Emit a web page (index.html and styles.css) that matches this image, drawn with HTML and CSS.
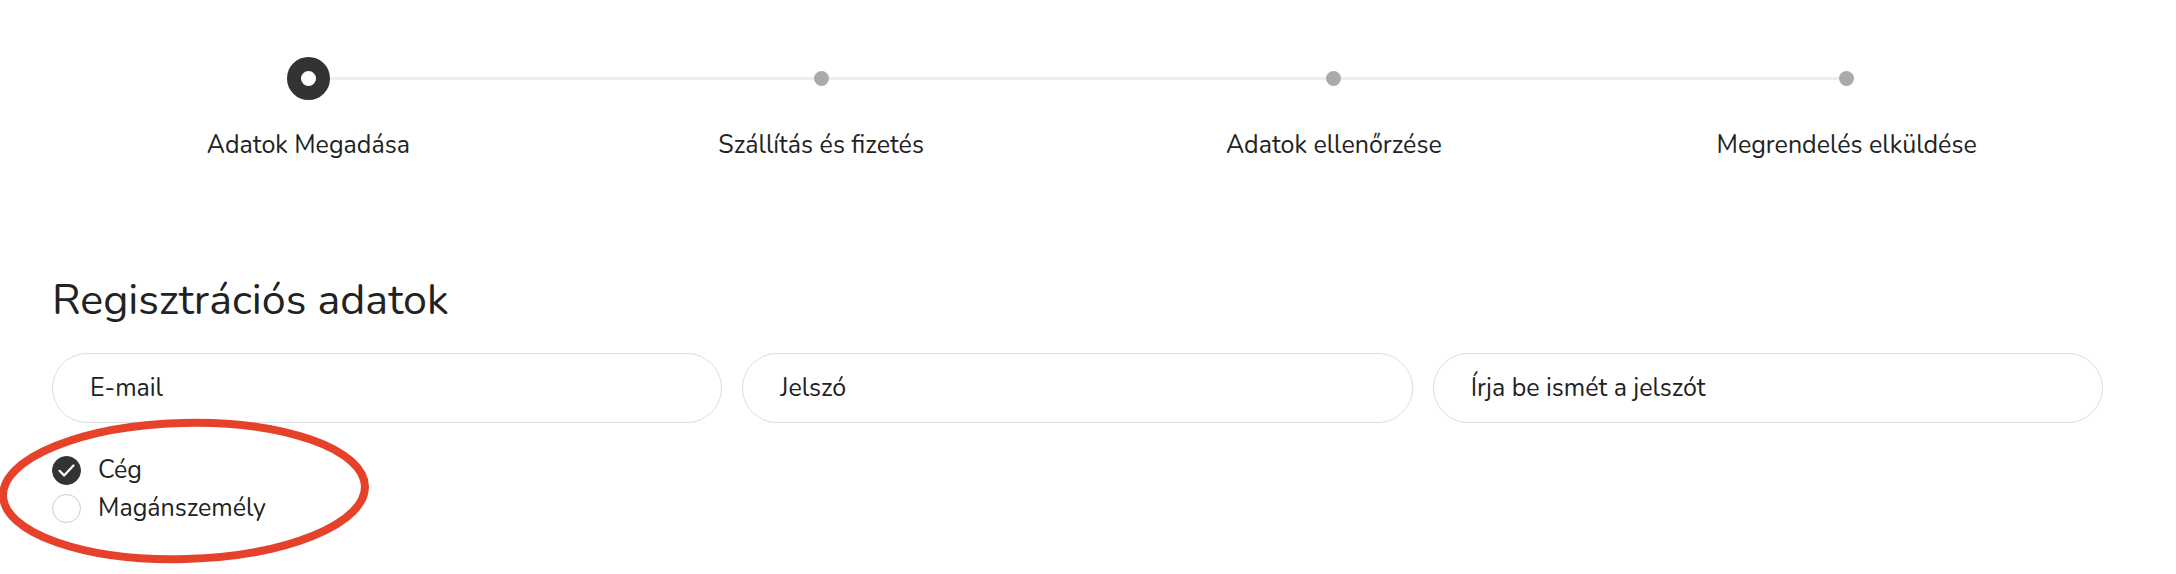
FILE: index.html
```html
<!DOCTYPE html>
<html lang="hu">
<head>
<meta charset="utf-8">
<title>Regisztráció</title>
<link rel="stylesheet" href="styles.css">
</head>
<body>
<div class="page">
  <ol class="stepper">
    <li class="step active"><span class="marker"><span class="dot"></span></span><span class="label">Adatok Megadása</span></li>
    <li class="step"><span class="marker"><span class="dot"></span></span><span class="label">Szállítás és fizetés</span></li>
    <li class="step"><span class="marker"><span class="dot"></span></span><span class="label">Adatok ellenőrzése</span></li>
    <li class="step"><span class="marker"><span class="dot"></span></span><span class="label">Megrendelés elküldése</span></li>
  </ol>

  <section class="form">
    <h1 class="title">Regisztrációs adatok</h1>
    <div class="fields">
      <div class="field">E-mail</div>
      <div class="field">Jelszó</div>
      <div class="field">Írja be ismét a jelszót</div>
    </div>
    <div class="choices">
      <label class="choice"><span class="radio checked"><svg width="19" height="15" viewBox="0 0 19 15"><path d="M2.5 7.8l4.6 4.6L16.5 2.5" fill="none" stroke="#fff" stroke-width="2.2" stroke-linecap="round" stroke-linejoin="round"/></svg></span><span>Cég</span></label>
      <label class="choice"><span class="radio"></span><span>Magánszemély</span></label>
    </div>
  </section>

  <svg class="annot" width="400" height="170" viewBox="0 0 400 170"><ellipse cx="186" cy="81" rx="181" ry="68" fill="none" stroke="#e6412a" stroke-width="8" transform="rotate(-1.5 186 81)"/></svg>
</div>
</body>
</html>
```

FILE: styles.css
```css
* { box-sizing: border-box; }
html, body { margin: 0; padding: 0; background: #fff; }
body {
  font-family: "Nunito", Lato, "Open Sans", sans-serif;
  color: #222;
}
.page {
  position: relative;
  width: 2103px;
  min-height: 574px;
  padding: 57px 0 0 52px;
}
.stepper {
  list-style: none;
  margin: 0;
  padding: 0;
  display: grid;
  grid-template-columns: repeat(4, 1fr);
}
.step {
  position: relative;
  display: flex;
  flex-direction: column;
  align-items: center;
}
.step:not(:last-child)::before {
  content: "";
  position: absolute;
  left: 50%;
  width: 100%;
  top: 20px;
  height: 3px;
  background: #eeeeee;
}
.marker {
  position: relative;
  z-index: 1;
  height: 43px;
  display: flex;
  align-items: center;
  justify-content: center;
}
.dot {
  width: 15px;
  height: 15px;
  border-radius: 50%;
  background: #aaaaaa;
}
.step.active .dot {
  width: 43px;
  height: 43px;
  background: #fff;
  border: 14px solid #333;
}
.label {
  margin-top: 29px;
  font-size: 25px;
  line-height: 32px;
  color: #222;
}
.form {
  margin-top: 111px;
}
.title {
  margin: 0;
  font-weight: 400;
  font-size: 43px;
  line-height: 56px;
  color: #222;
}
.fields {
  margin-top: 25px;
  display: grid;
  grid-template-columns: repeat(3, 1fr);
  column-gap: 20px;
}
.field {
  height: 70px;
  border: 1px solid #dddddd;
  border-radius: 35px;
  padding-left: 37px;
  display: flex;
  align-items: center;
  font-size: 25px;
  color: #222;
}
.choices {
  margin-top: 32px;
  display: flex;
  flex-direction: column;
  gap: 8px;
}
.choice {
  display: flex;
  align-items: center;
  gap: 17px;
  font-size: 25px;
  line-height: 30px;
  color: #222;
}
.radio {
  width: 29px;
  height: 29px;
  border-radius: 50%;
  border: 1px solid #cccccc;
  background: #fff;
  display: flex;
  align-items: center;
  justify-content: center;
}
.radio.checked {
  background: #333;
  border-color: #333;
}
.annot {
  position: absolute;
  left: -2px;
  top: 410px;
  overflow: visible;
  pointer-events: none;
}
```
